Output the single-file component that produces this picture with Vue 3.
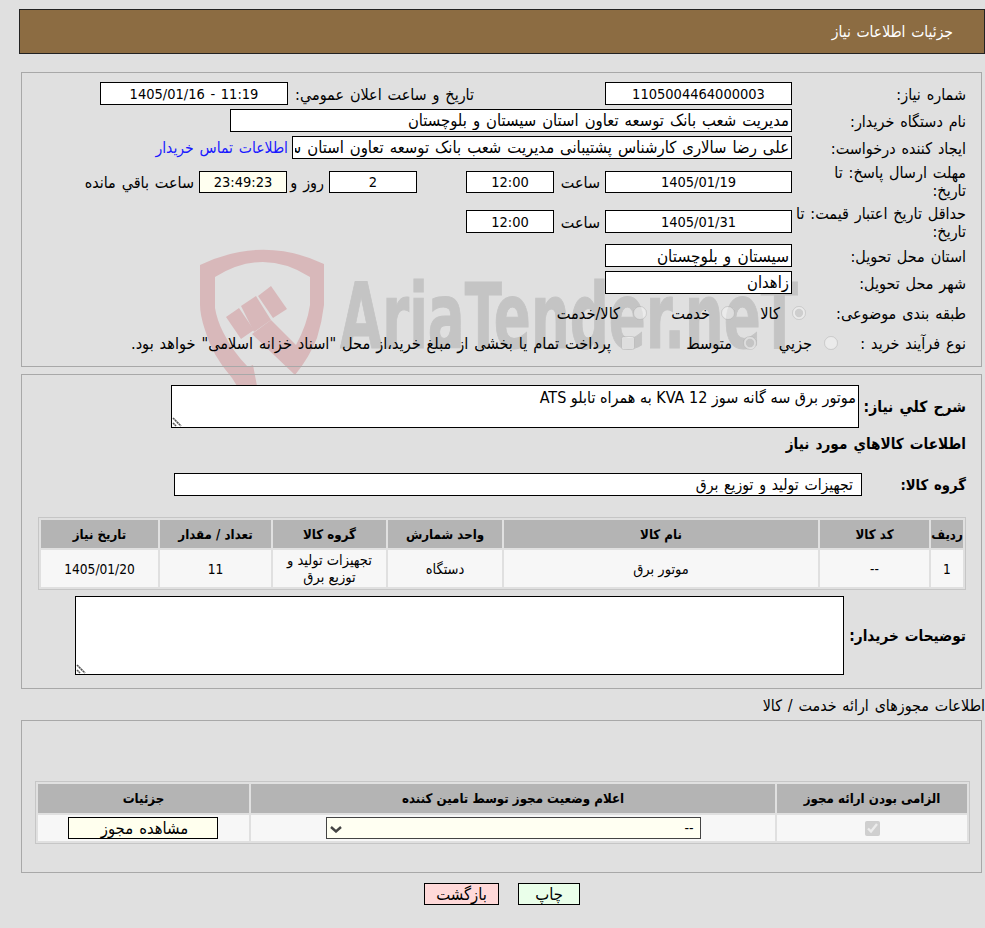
<script setup>
const goods = [
  { id: 1, code: '--', name: 'موتور برق', unit: 'دستگاه', group: 'تجهیزات تولید و توزیع برق', qty: 11, date: '1405/01/20' }
]
const creator = 'علی رضا سالاری کارشناس پشتیبانی مدیریت شعب بانک توسعه تعاون استان سیستان و بلوچستان'
</script>

<template>
  <div class="page">
    <svg class="mark" viewBox="190 240 620 190" aria-hidden="true">
      <path class="mark-red" d="M200 265 Q263 235 324 264 L324 305 Q322 322 317 338 Q309 358 295 375 L252 334 L271 320 L296 345 Q307 325 310 305 L310 277 Q263 247 215 277 L215 308 Q217 320 223 332 Q233 352 248 367 L253 365 L257 386 L237 386 L232 378 Q212 355 205 330 Q200 315 200 305 Z" />
      <polygon class="mark-red" points="226,317 239,308 254,330 241,339" />
      <polygon class="mark-red" points="241,306 256,296 271,320 254,332" />
      <polygon class="mark-red" points="258,296 271,286 287,309 273,318" />
      <text class="mark-text" x="340" y="348" textLength="458" lengthAdjust="spacingAndGlyphs">AriaTender.neT</text>
    </svg>

    <header class="title-bar">جزئیات اطلاعات نیاز</header>

    <section class="panel panel-main">
      <div class="row row-1">
        <label class="lbl">شماره نیاز:</label>
        <input class="box box-md num" readonly value="1105004464000003" />
        <label class="lbl-mid announce">تاریخ و ساعت اعلان عمومي:</label>
        <input class="box box-lg num num-stamp" readonly value="11:19 - 1405/01/16" />
      </div>
      <div class="row row-2">
        <label class="lbl">نام دستگاه خریدار:</label>
        <input class="box box-start box-buyer" readonly value="مدیریت شعب بانک توسعه تعاون استان سیستان و بلوچستان" />
      </div>
      <div class="row row-3">
        <label class="lbl">ایجاد کننده درخواست:</label>
        <input class="box box-start box-creator" readonly :value="creator" />
        <a class="contact" href="#">اطلاعات تماس خریدار</a>
      </div>
      <div class="row row-4">
        <label class="lbl lbl-wrap">مهلت ارسال پاسخ: تا<br />تاریخ:</label>
        <input class="box box-md box-short num" readonly value="1405/01/19" />
        <label class="lbl-mid hour">ساعت</label>
        <input class="box box-sm box-short num" readonly value="12:00" />
        <input class="box box-sm box-short days num" readonly value="2" />
        <label class="lbl-mid and-days">روز و</label>
        <input class="box box-sm box-short timer num" readonly value="23:49:23" />
        <label class="lbl-mid remain">ساعت باقي مانده</label>
      </div>
      <div class="row row-5">
        <label class="lbl lbl-wrap">حداقل تاریخ اعتبار قیمت: تا<br />تاریخ:</label>
        <input class="box box-md num" readonly value="1405/01/31" />
        <label class="lbl-mid hour">ساعت</label>
        <input class="box box-sm num" readonly value="12:00" />
      </div>
      <div class="row row-6">
        <label class="lbl">استان محل تحویل:</label>
        <input class="box box-md box-start box-wide" readonly value="سیستان و بلوچستان" />
      </div>
      <div class="row row-7">
        <label class="lbl">شهر محل تحویل:</label>
        <input class="box box-md box-start" readonly value="زاهدان" />
      </div>
      <div class="row row-8">
        <label class="lbl lbl-cat">طبقه بندی موضوعی:</label>
        <input class="opt" type="radio" name="cat" disabled checked />
        <span class="opt-text t-kala">کالا</span>
        <input class="opt" type="radio" name="cat" disabled />
        <span class="opt-text t-khedmat">خدمت</span>
        <input class="opt" type="radio" name="cat" disabled />
        <span class="opt-text t-both">کالا/خدمت</span>
      </div>
      <div class="row row-9">
        <label class="lbl lbl-proc">نوع فرآیند خرید :</label>
        <input class="opt" type="radio" name="proc" disabled />
        <span class="opt-text t-jozi">جزیي</span>
        <input class="opt" type="radio" name="proc" disabled checked />
        <span class="opt-text t-motavaset">متوسط</span>
        <input class="opt" type="checkbox" disabled />
        <span class="opt-text t-pay">پرداخت تمام یا بخشی از مبلغ خرید،از محل "اسناد خزانه اسلامی" خواهد بود.</span>
      </div>
    </section>

    <section class="panel panel-goods">
      <div class="row row-desc">
        <label class="lbl-b lbl-desc">شرح كلي نياز:</label>
        <div class="area-wrap area-desc">
          <textarea class="area" readonly>موتور برق سه گانه سوز KVA 12 به همراه تابلو ATS</textarea>
          <svg class="grip" viewBox="0 0 10 10" aria-hidden="true"><path d="M1 1 L9 9 M1 6 L4 9" /></svg>
        </div>
      </div>
      <h3 class="sub">اطلاعات كالاهاي مورد نياز</h3>
      <div class="row row-group">
        <label class="lbl-b lbl-group">گروه کالا:</label>
        <input class="box box-start box-group" readonly value="تجهیزات تولید و توزیع برق" />
      </div>
      <div class="grid grid-goods">
        <div class="th">ردیف</div>
        <div class="th">کد کالا</div>
        <div class="th">نام کالا</div>
        <div class="th">واحد شمارش</div>
        <div class="th">گروه کالا</div>
        <div class="th">تعداد / مقدار</div>
        <div class="th">تاریخ نیاز</div>
        <template v-for="g in goods" :key="g.id">
          <div class="td td-num">{{ g.id }}</div>
          <div class="td td-num">{{ g.code }}</div>
          <div class="td">{{ g.name }}</div>
          <div class="td">{{ g.unit }}</div>
          <div class="td td-tight">{{ g.group }}</div>
          <div class="td td-num">{{ g.qty }}</div>
          <div class="td td-num">{{ g.date }}</div>
        </template>
      </div>
      <div class="row row-notes">
        <label class="lbl-b lbl-notes">توضیحات خریدار:</label>
        <div class="area-wrap area-notes">
          <textarea class="area" readonly></textarea>
          <svg class="grip" viewBox="0 0 10 10" aria-hidden="true"><path d="M1 1 L9 9 M1 6 L4 9" /></svg>
        </div>
      </div>
    </section>

    <p class="licence-title">اطلاعات مجوزهای ارائه خدمت / کالا</p>

    <section class="panel panel-licence">
      <div class="grid grid-licence">
        <div class="th">الزامی بودن ارائه مجوز</div>
        <div class="th">اعلام وضعیت مجوز توسط تامین کننده</div>
        <div class="th">جزئیات</div>
        <div class="td"><input class="chk" type="checkbox" checked disabled /></div>
        <div class="td">
          <div class="status-wrap">
            <select class="status"><option>--</option></select>
            <svg class="chev" viewBox="0 0 12 7" aria-hidden="true"><path d="M1 1 L6 5.5 L11 1" /></svg>
          </div>
        </div>
        <div class="td"><button class="view" type="button">مشاهده مجوز</button></div>
      </div>
    </section>

    <footer class="actions">
      <button class="act act-print" type="button">چاپ</button>
      <button class="act act-back" type="button">بازگشت</button>
    </footer>
  </div>
</template>

<style>
html, body { margin: 0; background: #e0e0e0; }
</style>

<style scoped>
.page {
  --ui: "DejaVu Sans Condensed", "DejaVu Sans", sans-serif;
  position: relative;
  width: 985px;
  height: 928px;
  overflow: hidden;
  direction: rtl;
  background: #e0e0e0;
  color: #000;
  font: 16px/18px var(--ui);
  word-spacing: 1.3px;
  box-sizing: border-box;
  padding-top: 9px;
}
.mark { position: absolute; left: 190px; top: 240px; width: 620px; height: 190px; direction: ltr; }
.mark-red { fill: #d8b8ba; }
.mark-text { fill: #c4c4c4; stroke: #c4c4c4; stroke-width: 1px; font: bold 90px "DejaVu Sans Condensed", sans-serif; word-spacing: 0; }

.title-bar {
  position: relative;
  box-sizing: border-box;
  width: 966px;
  height: 45px;
  padding: 13px 31px 0 0;
  background: #8c6c42;
  border: 1px solid #222;
  color: #fff;
  font-size: 15.5px;
}
.panel {
  position: relative;
  box-sizing: border-box;
  width: 961px;
  margin-right: 3px;
  border: 1px solid #a8a8a8;
}
.panel-main { height: 295px; margin-top: 18px; padding: 9px 15px 0 0; }
.panel-goods { height: 315px; margin-top: 7px; padding: 10px 15px 0 0; }
.panel-licence { height: 153px; margin-top: 5px; padding: 60px 11px 0 0; }

.row { display: flex; align-items: center; }
.row-2, .row-3 { margin-top: 4px; }
.row-4 { margin-top: 4px; height: 37px; }
.row-5 { margin-top: 4px; height: 35px; }
.row-6 { margin-top: 5px; }
.row-7 { margin-top: 4px; }
.row-8 { margin-top: 9px; height: 20px; }
.row-9 { margin-top: 10px; height: 20px; }

.lbl { flex: none; width: 174px; padding-top: 2px; box-sizing: border-box; white-space: nowrap; }
.lbl-wrap { line-height: 18px; padding-top: 1px; }
.row-5 .lbl-wrap { padding-top: 3px; }
.lbl-mid { flex: none; padding-top: 2px; white-space: nowrap; }
.lbl-cat { width: 160px; }
.lbl-proc { width: 128px; }

.box {
  flex: none;
  box-sizing: border-box;
  height: 23px;
  border: 1px solid #000;
  background: #fff;
  font: 16.5px var(--ui);
  word-spacing: 1.3px;
  color: #000;
  text-align: center;
  padding: 0 2px;
  outline: none;
  direction: rtl;
}
.num { font-size: 14.5px; word-spacing: 0; }
.num-stamp { word-spacing: 1.5px; }
.box-start { text-align: right; }
.box-md { width: 187px; }
.box-lg { width: 188px; }
.box-sm { width: 88px; }
.box-short { height: 22px; }
.box-buyer { width: 562px; }
.box-creator { width: 500px; }
.box-wide { font-size: 17px; }
.box-group { width: 688px; padding-right: 8px; font-size: 15.6px; }

.announce { width: 186px; margin-right: 131px; }
.hour { width: 51px; text-align: right; box-sizing: border-box; padding-right: 5px; }
.days { margin-right: 49px; }
.and-days { width: 42px; box-sizing: border-box; padding-right: 5px; }
.timer { background: #fffff0; }
.remain { margin-right: 5px; }
.contact { flex: none; margin-right: 4px; padding-top: 1px; font-size: 15.6px; color: #1a1aff; text-decoration: none; white-space: nowrap; }

.opt { flex: none; width: 14px; height: 14px; margin: 0; opacity: .8; }
.opt-text { flex: none; padding-top: 2px; font-size: 16.2px; white-space: nowrap; }
.t-kala { width: 45px; margin-right: 12px; }
.t-khedmat { width: 63px; margin-right: 11px; }
.t-both { margin-right: 13px; }
.t-jozi { width: 55px; margin-right: 12px; }
.t-motavaset { width: 97px; margin-right: 11px; }
.t-pay { margin-right: 10px; }

.lbl-b { flex: none; font-weight: bold; font-size: 15.5px; white-space: nowrap; }
.lbl-desc { width: 107px; }
.lbl-group { width: 104px; font-size: 14.7px; }
.lbl-notes { width: 122px; font-size: 15.2px; }
.area-wrap { position: relative; flex: none; }
.area-desc { width: 688px; height: 43px; }
.area-notes { width: 769px; height: 79px; }
.area {
  display: block;
  box-sizing: border-box;
  width: 100%;
  height: 100%;
  margin: 0;
  border: 1px solid #000;
  background: #fff;
  color: #000;
  font: 16px/18px var(--ui);
  padding: 3px 2px 0;
  outline: none;
  resize: none;
  direction: rtl;
}
.grip { position: absolute; left: 1px; bottom: 1px; width: 10px; height: 10px; pointer-events: none; }
.grip path { fill: none; stroke: #555; stroke-width: 1.6; stroke-dasharray: 2.2 .5; }
.sub { margin: 7px 0 0; height: 17px; font-size: 15.2px; line-height: 18px; font-weight: bold; }
.row-group { margin-top: 21px; }

.grid {
  display: grid;
  box-sizing: border-box;
  gap: 2px;
  padding: 2px;
  border: 1px solid #c6c6c6;
}
.grid-goods {
  grid-template-columns: 32px 109px 314px 114px 113px 111px 117px;
  grid-template-rows: 28px 37px;
  width: 928px;
  margin-top: 21px;
}
.grid-licence {
  grid-template-columns: 190px 524px 211px;
  grid-template-rows: 29px 26px;
  width: 935px;
}
.th {
  display: flex;
  align-items: center;
  justify-content: center;
  padding-top: 1px;
  background: #b4b4b4;
  font-weight: bold;
  font-size: 13.2px;
  word-spacing: 0;
}
.td {
  display: flex;
  align-items: center;
  justify-content: center;
  background: #f7f7f7;
  font-size: 14.5px;
  word-spacing: 0;
  text-align: center;
}
.td-num { font-size: 13.6px; }
.td-tight { line-height: 17px; padding: 0 8px; }
.row-notes { margin-top: 6px; }

.licence-title { margin: 8px 0 0; height: 18px; line-height: 18px; font-size: 15.9px; white-space: nowrap; }

.chk { width: 15px; height: 15px; margin: 0; }
.status-wrap { position: relative; width: 375px; height: 22px; }
.status {
  display: block;
  box-sizing: border-box;
  width: 100%;
  height: 100%;
  appearance: none;
  border: 1px solid #444;
  border-radius: 0;
  background-color: #fffff2;
  padding: 0 6px;
  font: 14px var(--ui);
  color: #000;
  direction: rtl;
}
.chev { position: absolute; left: 4px; top: 9px; width: 12px; height: 7px; pointer-events: none; }
.chev path { fill: none; stroke: #444; stroke-width: 2.4; }
.view {
  box-sizing: border-box;
  width: 150px;
  height: 22px;
  margin-right: 1px;
  padding: 0 0 0 3px;
  border: 1px solid #000;
  background: #ffffee;
  font: 16.5px var(--ui);
  word-spacing: 1.3px;
  color: #000;
}
.actions { display: flex; gap: 19px; margin-top: 10px; padding-right: 405px; }
.act {
  box-sizing: border-box;
  height: 22px;
  padding: 0;
  border: 1px solid #000;
  font: 16.5px var(--ui);
  color: #000;
}
.act-print { width: 62px; background: #eaffea; }
.act-back { width: 75px; background: #ffd9d9; }
</style>
